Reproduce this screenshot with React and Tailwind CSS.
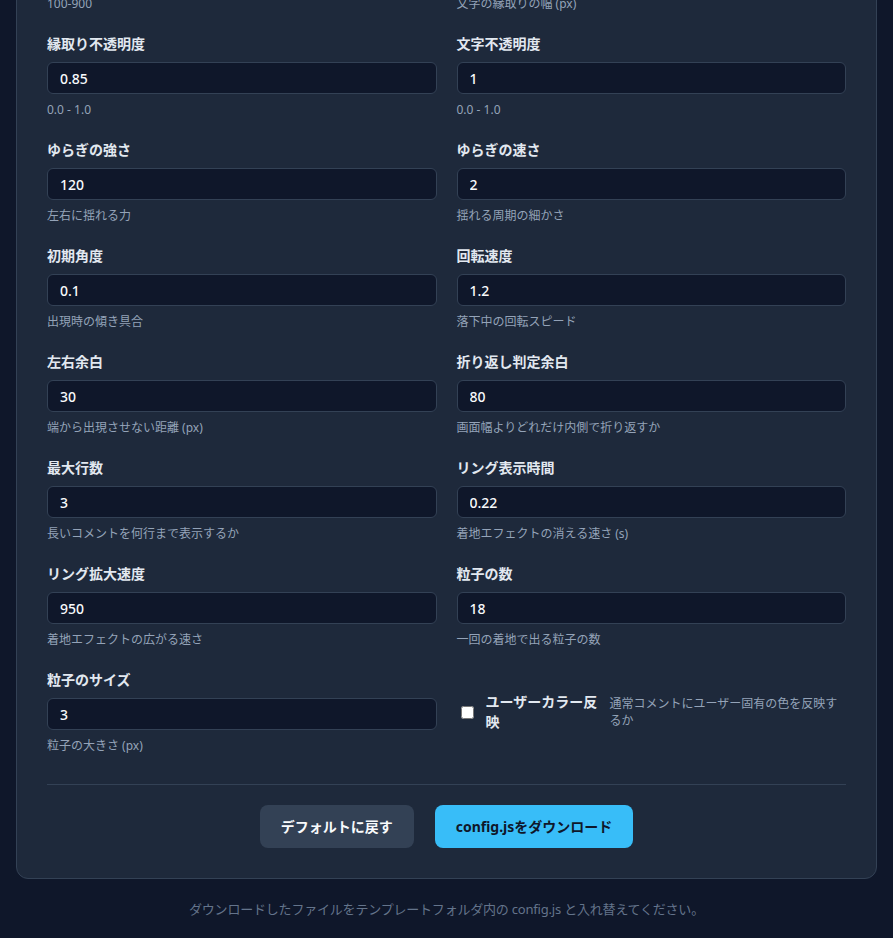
import React, { useState } from "react";

const fields = [
  { key: "fontWeight", label: "文字の太さ", value: "700", hint: "100-900" },
  { key: "strokeWidth", label: "縁取りの幅", value: "4", hint: "文字の縁取りの幅 (px)" },
  { key: "strokeOpacity", label: "縁取り不透明度", value: "0.85", hint: "0.0 - 1.0" },
  { key: "textOpacity", label: "文字不透明度", value: "1", hint: "0.0 - 1.0" },
  { key: "swayStrength", label: "ゆらぎの強さ", value: "120", hint: "左右に揺れる力" },
  { key: "swaySpeed", label: "ゆらぎの速さ", value: "2", hint: "揺れる周期の細かさ" },
  { key: "initialAngle", label: "初期角度", value: "0.1", hint: "出現時の傾き具合" },
  { key: "rotationSpeed", label: "回転速度", value: "1.2", hint: "落下中の回転スピード" },
  { key: "sideMargin", label: "左右余白", value: "30", hint: "端から出現させない距離 (px)" },
  { key: "wrapMargin", label: "折り返し判定余白", value: "80", hint: "画面幅よりどれだけ内側で折り返すか" },
  { key: "maxLines", label: "最大行数", value: "3", hint: "長いコメントを何行まで表示するか" },
  { key: "ringDuration", label: "リング表示時間", value: "0.22", hint: "着地エフェクトの消える速さ (s)" },
  { key: "ringSpeed", label: "リング拡大速度", value: "950", hint: "着地エフェクトの広がる速さ" },
  { key: "particleCount", label: "粒子の数", value: "18", hint: "一回の着地で出る粒子の数" },
  { key: "particleSize", label: "粒子のサイズ", value: "3", hint: "粒子の大きさ (px)" },
];

const FONT = { fontFamily: '"Noto Sans", "Noto Sans CJK JP", sans-serif' };

const Field = ({ field, value, onChange }) => (
  <div className="flex flex-col">
    <label className="text-sm leading-5 font-bold text-[#e2e8f0] mb-2">{field.label}</label>
    <input
      type="text"
      value={value}
      onChange={(e) => onChange(field.key, e.target.value)}
      className="h-8 w-full rounded-md border border-[#334155] bg-[#0f172a] px-3 text-sm font-medium text-[#f8fafc] outline-none"
    />
    <p className="mt-2 text-xs leading-4 text-[#94a3b8]">{field.hint}</p>
  </div>
);

export default function App() {
  const [values, setValues] = useState(
    Object.fromEntries(fields.map((f) => [f.key, f.value]))
  );
  const [userColor, setUserColor] = useState(false);

  const update = (key, v) => setValues((prev) => ({ ...prev, [key]: v }));

  return (
    <div className="min-h-screen overflow-hidden bg-[#0f172a] px-4" style={FONT}>
      <div className="-mt-[103px] rounded-xl border border-[#334155] bg-[#1e293b] p-[30px]">
        <div className="grid grid-cols-2 gap-x-5 gap-y-[22px]">
          {fields.map((f) => (
            <Field key={f.key} field={f} value={values[f.key]} onChange={update} />
          ))}
          {/* checkbox option */}
          <div className="flex items-center">
            <input
              type="checkbox"
              checked={userColor}
              onChange={(e) => setUserColor(e.target.checked)}
              className="ml-1 h-[13px] w-[13px] shrink-0"
            />
            <span className="ml-3 w-[112px] shrink-0 text-sm font-bold leading-5 text-[#e2e8f0]">
              ユーザーカラー反映
            </span>
            <span className="ml-3 w-[236px] text-xs leading-[17px] text-[#94a3b8]">
              通常コメントにユーザー固有の色を反映するか
            </span>
          </div>
        </div>

        <div className="mt-[30px] border-t border-[#334155] pt-5 flex justify-center gap-[21px]">
          <button
            type="button"
            className="h-[43px] rounded-lg bg-[#334155] px-[21px] text-sm font-bold text-[#f8fafc]"
          >
            デフォルトに戻す
          </button>
          <button
            type="button"
            className="h-[43px] rounded-lg bg-[#38bdf8] px-[21px] text-sm font-bold text-[#0f172a]"
          >
            config.jsをダウンロード
          </button>
        </div>
      </div>

      <p className="mt-5 pb-6 text-center text-[13px] leading-5 tracking-[-0.2px] text-[#64748b]">
        ダウンロードしたファイルをテンプレートフォルダ内の config.js と入れ替えてください。
      </p>
    </div>
  );
}
